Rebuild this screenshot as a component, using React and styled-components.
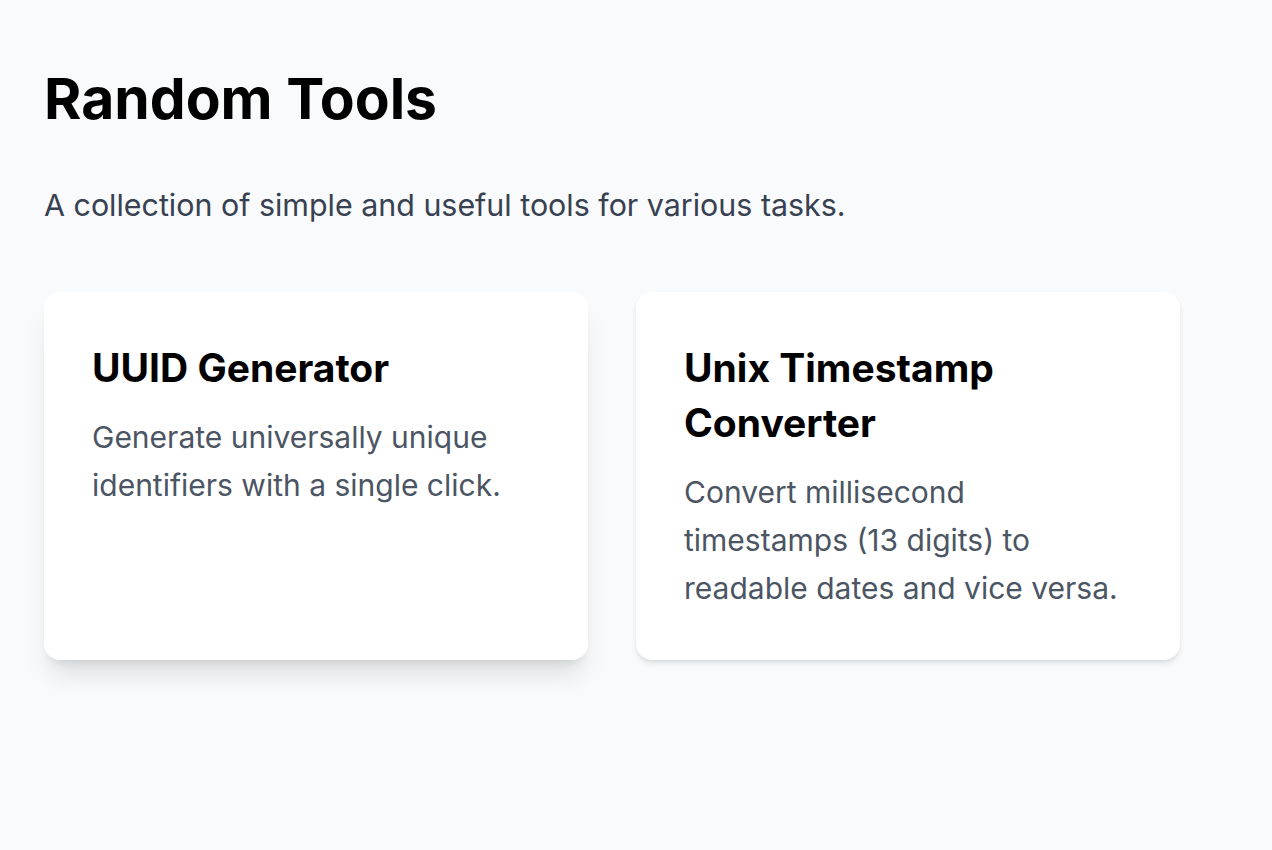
import React from 'react';
import styled, { createGlobalStyle } from 'styled-components';

const GlobalStyle = createGlobalStyle`
    html, body {
        margin: 0;
        padding: 0;
        background: #f9fafb;
        font-family: Inter, "Noto Sans", "Liberation Sans", sans-serif;
    }
`

const Page = styled.div`
    min-height: 850px;
    padding: 65px 44px 44px;
    box-sizing: border-box;
`
const Title = styled.h1`
    margin: 0;
    font-size: 57px;
    line-height: 1.2;
    font-weight: 700;
    color: #000000;
`
const Subtitle = styled.p`
    margin: 50px 0 0;
    font-size: 30.4px;
    line-height: 45px;
    color: #374151;
`
const Grid = styled.div`
    margin-top: 64px;
    display: grid;
    grid-template-columns: repeat(2, 544px);
    gap: 48px;
`
const Card = styled.div`
    background: #ffffff;
    border-radius: 16px;
    padding: 48px;
    box-shadow: ${({ raised }) => raised
        ? "0 20px 25px -5px rgba(0,0,0,0.1), 0 8px 10px -6px rgba(0,0,0,0.1)"
        : "0 4px 6px -1px rgba(0,0,0,0.1), 0 2px 4px -2px rgba(0,0,0,0.1)"};
`
const CardTitle = styled.h2`
    margin: 0;
    font-size: 39px;
    line-height: 55px;
    font-weight: 700;
    color: #000000;
`
const CardText = styled.p`
    margin: 18px 0 0;
    font-size: 30px;
    line-height: 48px;
    color: #4b5563;
`

const tools = [
    {
        id: 0,
        title: "UUID Generator",
        text: "Generate universally unique identifiers with a single click.",
        raised: true
    },
    {
        id: 1,
        title: "Unix Timestamp Converter",
        text: "Convert millisecond timestamps (13 digits) to readable dates and vice versa.",
        raised: false
    },
]

const App = () => (
    <>
        <GlobalStyle />
        <Page>
            <Title>Random Tools</Title>
            <Subtitle>A collection of simple and useful tools for various tasks.</Subtitle>
            <Grid>
                {tools.map(tool => (
                    <Card key={tool.id} raised={tool.raised}>
                        <CardTitle>{tool.title}</CardTitle>
                        <CardText>{tool.text}</CardText>
                    </Card>
                ))}
            </Grid>
        </Page>
    </>
)

export default App;
